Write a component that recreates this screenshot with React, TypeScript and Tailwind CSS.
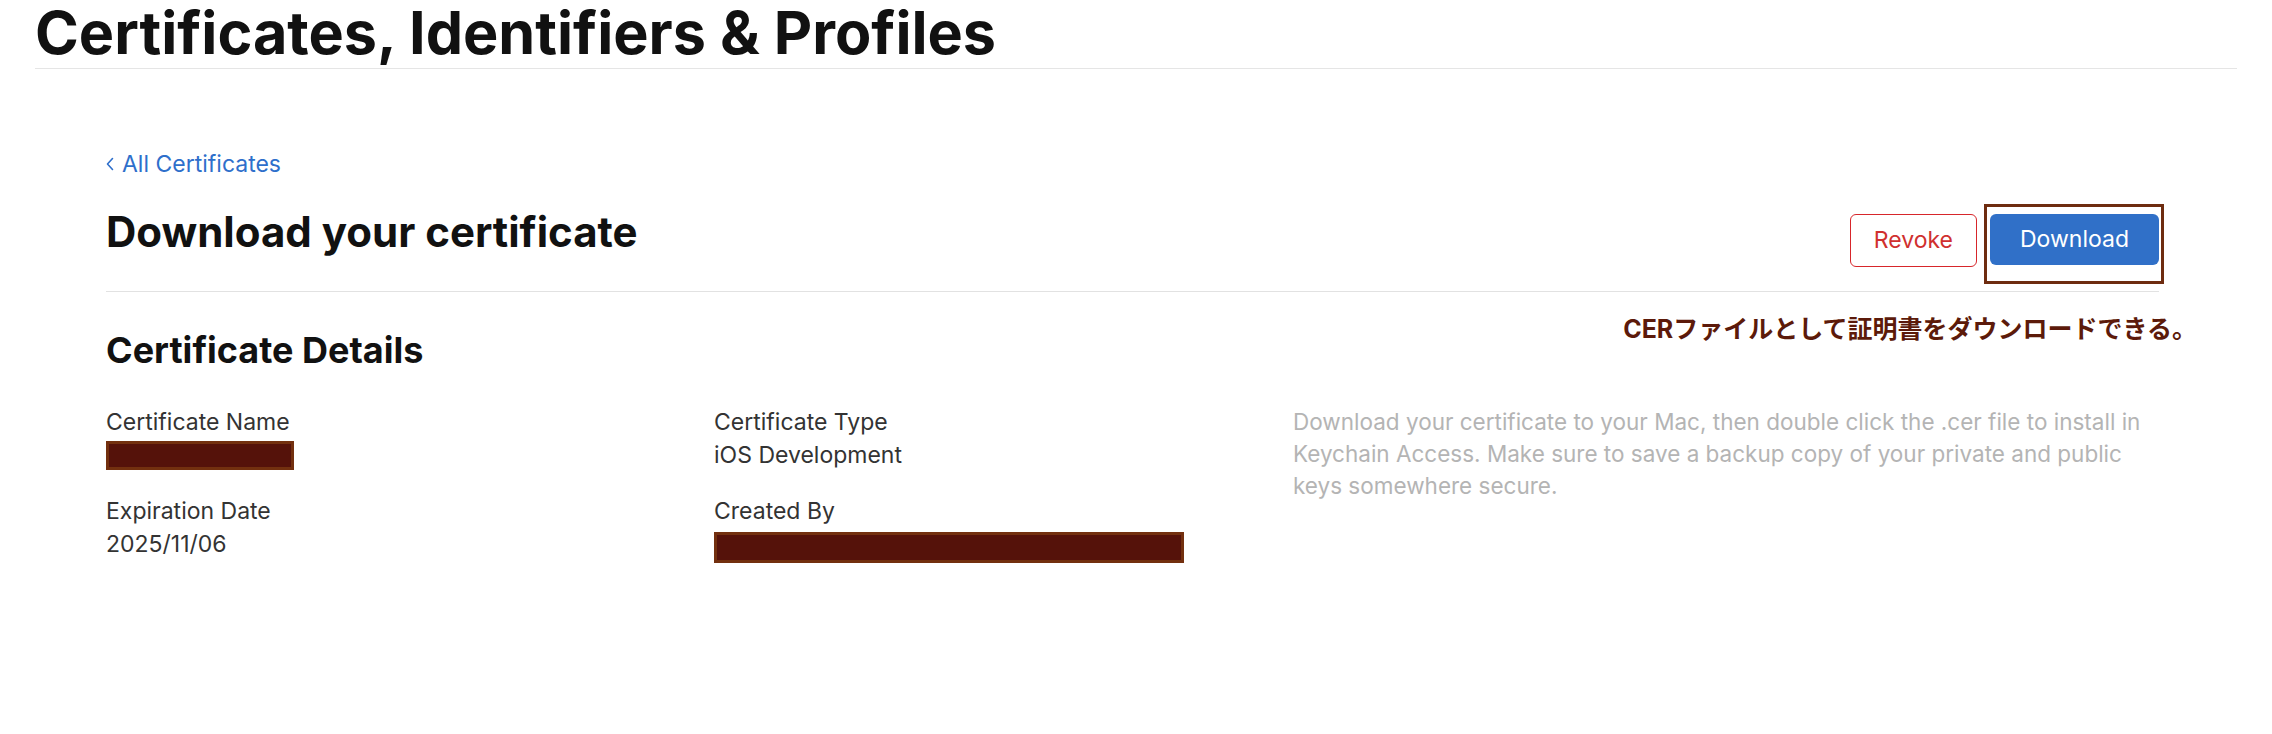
import React from 'react';

const Redacted: React.FC<{ className: string }> = ({ className }) => (
  <div className={`bg-[#55120a] border-[3px] border-[#73300f] ${className}`} />
);

const Field: React.FC<{ label: string; children: React.ReactNode }> = ({ label, children }) => (
  <div className="flex flex-col">
    <div className="text-[23px] leading-[33px] text-[#333]">{label}</div>
    <div className="text-[23px] leading-[33px] text-[#333] h-[33px]">{children}</div>
  </div>
);

const App: React.FC = () => {
  return (
    <div className="min-h-screen bg-white font-['Inter',sans-serif] text-[#333]">
      {/* Page title */}
      <div className="px-[35px]">
        <h1 className="pt-[3px] pb-[5px] text-[59.3px] leading-[60px] font-bold text-[#111] border-b border-[#e5e5e5]">
          Certificates, Identifiers &amp; Profiles
        </h1>
      </div>

      <div className="pl-[106px] pr-[113px]">
        <a href="#" className="mt-[79px] flex items-center gap-[8px] text-[23px] leading-[32px] text-[#2e6fcb]">
          <svg width="8" height="14" viewBox="0 0 8 14" fill="none" stroke="currentColor" strokeWidth={1.6}>
            <path d="M6.5 1.5L1.5 7l5 5.5" strokeLinecap="round" strokeLinejoin="round" />
          </svg>
          All Certificates
        </a>

        {/* Header row */}
        <div className="relative mt-[26px] pb-[24px] flex items-start justify-between border-b border-[#e2e2e2]">
          <h2 className="text-[42px] leading-[52px] font-bold text-[#111]">Download your certificate</h2>
          <div className="mt-[8px] flex items-start gap-[13px]">
            <button className="h-[53px] px-[23px] rounded-[6px] border border-[#d7262b] text-[#d0302f] text-[23px] bg-white">
              Revoke
            </button>
            <div className="relative">
              <button className="h-[51px] px-[30px] rounded-[6px] bg-[#3070c8] text-white text-[23px]">
                Download
              </button>
              <div className="absolute -top-[10px] -bottom-[19px] -left-[6px] -right-[5px] border-[3px] border-[#6e2c10] pointer-events-none" />
            </div>
          </div>
          <div className="absolute right-[-38px] top-[107px] text-[25px] leading-[32px] font-bold text-[#5c1a0a] font-['Inter','Noto_Sans_CJK_JP',sans-serif]">
            CERファイルとして証明書をダウンロードできる。
          </div>
        </div>

        {/* Details */}
        <h3 className="mt-[36px] text-[36px] leading-[44px] font-bold text-[#111]">Certificate Details</h3>

        <div className="mt-[34px] grid grid-cols-[608px_579px_1fr]">
          <div className="flex flex-col gap-[23px]">
            <Field label="Certificate Name">
              <Redacted className="mt-[2px] w-[188px] h-[29px]" />
            </Field>
            <Field label="Expiration Date">2025/11/06</Field>
          </div>
          <div className="flex flex-col gap-[23px]">
            <Field label="Certificate Type">iOS Development</Field>
            <Field label="Created By">
              <Redacted className="mt-[4px] w-[470px] h-[31px]" />
            </Field>
          </div>
          <p className="text-[22.5px] leading-[32px] text-[#b4b4b4] max-w-[870px]">
            Download your certificate to your Mac, then double click the .cer file to install in Keychain Access. Make
            sure to save a backup copy of your private and public keys somewhere secure.
          </p>
        </div>
      </div>
    </div>
  );
};

export default App;
